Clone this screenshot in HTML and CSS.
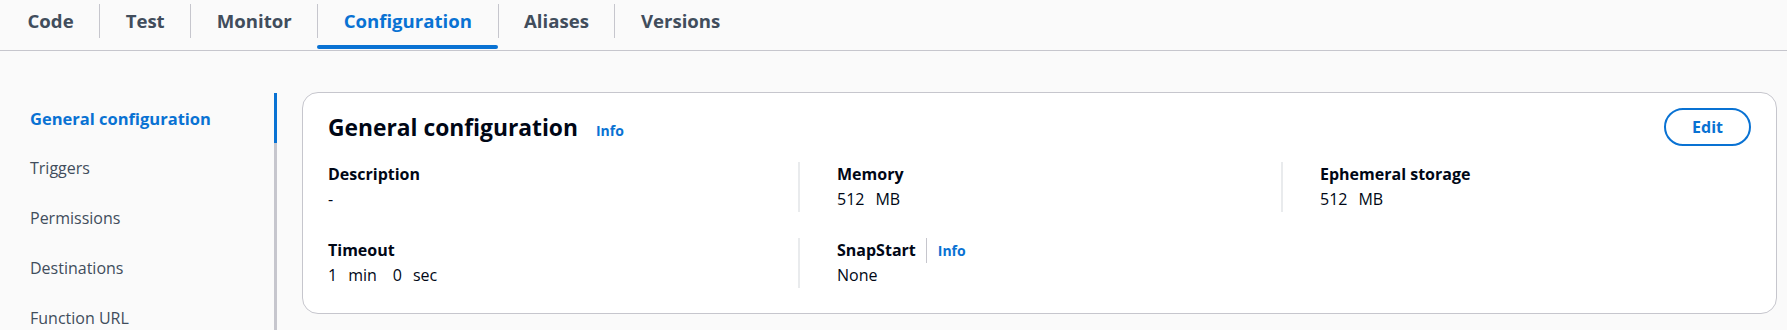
FILE: index.html
```html
<!DOCTYPE html>
<html lang="en">
<head>
    <meta charset="UTF-8">
    <meta name="viewport" content="width=device-width, initial-scale=1.0">
    <title>Function configuration</title>
    <link rel="stylesheet" href="styles.css">
</head>
<body>
    <div class="tabs">
        <div class="tab"><span class="tab-label">Code</span></div>
        <div class="tab"><span class="tab-label">Test</span></div>
        <div class="tab"><span class="tab-label">Monitor</span></div>
        <div class="tab active"><span class="tab-label">Configuration</span></div>
        <div class="tab"><span class="tab-label">Aliases</span></div>
        <div class="tab"><span class="tab-label">Versions</span></div>
    </div>

    <div class="main">
        <ul class="side-nav">
            <li class="side-item active">General configuration</li>
            <li class="side-item">Triggers</li>
            <li class="side-item">Permissions</li>
            <li class="side-item">Destinations</li>
            <li class="side-item">Function URL</li>
        </ul>

        <div class="card">
            <div class="card-header">
                <h2 class="card-title">General configuration <a class="info" href="#">Info</a></h2>
                <button class="edit-btn" type="button">Edit</button>
            </div>

            <div class="fields">
                <div class="field">
                    <div class="field-label">Description</div>
                    <div class="field-value">-</div>
                </div>
                <div class="field bordered">
                    <div class="field-label">Memory</div>
                    <div class="field-value">512<span class="unit">MB</span></div>
                </div>
                <div class="field bordered">
                    <div class="field-label">Ephemeral storage</div>
                    <div class="field-value">512<span class="unit">MB</span></div>
                </div>
                <div class="field">
                    <div class="field-label">Timeout</div>
                    <div class="field-value">1<span class="unit">min</span><span class="qty">0</span><span class="unit">sec</span></div>
                </div>
                <div class="field bordered">
                    <div class="field-label">SnapStart<span class="label-sep"></span><a class="info" href="#">Info</a></div>
                    <div class="field-value">None</div>
                </div>
            </div>
        </div>
    </div>
</body>
</html>
```

FILE: styles.css
```css
html, body {
    margin: 0;
    overflow: hidden;
}
body {
    font-family: "Open Sans", "Noto Sans", sans-serif;
    font-size: 16px;
    color: #000716;
    background-color: #fafafa;
}
.tabs {
    display: flex;
    height: 50px;
    padding-left: 2px;
    border-bottom: 1px solid #c6c6cd;
}
.tab {
    position: relative;
    padding-top: 4px;
    font-size: 18.6px;
    font-weight: bold;
    color: #414d5c;
}
.tab-label {
    display: block;
    padding: 0 25.5px;
    line-height: 34px;
    border-left: 1px solid #c6c6cd;
}
.tab:first-child .tab-label {
    border-left: none;
}
.tab.active {
    color: #0972d3;
}
.tab.active::after {
    content: "";
    position: absolute;
    left: 0;
    right: 0;
    bottom: 1px;
    height: 4px;
    border-radius: 2px;
    background-color: #0972d3;
}
.main {
    display: flex;
    align-items: flex-start;
    gap: 25px;
    padding: 41px 10px 0 0;
}
.side-nav {
    width: 277px;
    flex-shrink: 0;
    margin: 1px 0 0;
    padding: 0;
    list-style: none;
}
.side-item {
    display: flex;
    align-items: center;
    height: 50px;
    padding-left: 30px;
    color: #414d5c;
    border-right: 3px solid #c6c6cd;
}
.side-item.active {
    color: #0972d3;
    font-weight: bold;
    font-size: 16.5px;
    border-right-color: #0972d3;
}
.card {
    flex: 1;
    background-color: #fff;
    border: 1px solid #c6c6cd;
    border-radius: 16px;
    padding: 15px 25px 25px 25px;
}
.card-header {
    display: flex;
    align-items: center;
    justify-content: space-between;
    height: 38px;
}
.card-title {
    display: flex;
    align-items: baseline;
    margin: 0;
    font-size: 22.8px;
    font-weight: bold;
}
.info {
    color: #0972d3;
    font-size: 14px;
    font-weight: bold;
    text-decoration: none;
}
.card-title .info {
    margin-left: 18px;
}
.edit-btn {
    height: 38px;
    padding: 0 26px;
    border: 2px solid #0972d3;
    border-radius: 20px;
    background-color: #fff;
    color: #0972d3;
    font-family: inherit;
    font-size: 16px;
    font-weight: bold;
}
.fields {
    display: grid;
    grid-template-columns: 470px 483px 1fr;
    row-gap: 26px;
    margin-top: 16px;
}
.field {
    line-height: 25px;
}
.field.bordered {
    border-left: 2px solid #e9ebed;
    padding-left: 37px;
}
.field-label {
    display: flex;
    align-items: center;
    font-weight: bold;
}
.label-sep {
    width: 1px;
    height: 25px;
    margin: 0 11px 0 10px;
    background-color: #c6c6cd;
}
.unit {
    margin-left: 11px;
}
.qty {
    margin-left: 16px;
}
```
